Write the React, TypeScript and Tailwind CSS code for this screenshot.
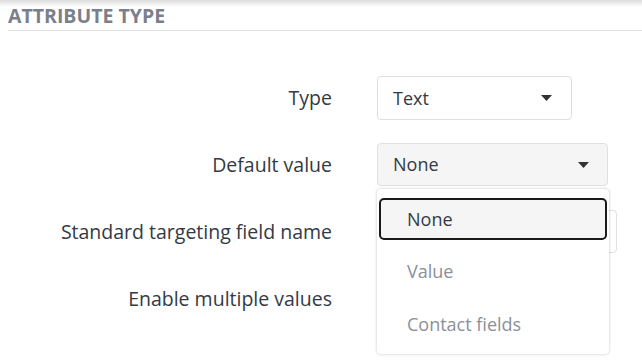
import React from "react";

function Caret() {
  return (
    <svg width="11" height="6" viewBox="0 0 11 6" className="shrink-0">
      <path d="M0 0 L11 0 L5.5 6 Z" fill="#333333" />
    </svg>
  );
}

export default function App() {
  return (
    <div
      className="relative w-[642px] h-[363px] overflow-hidden bg-white text-[#333a45]"
      style={{ fontFamily: '"Open Sans", "Noto Sans", sans-serif' }}
    >
      <div className="absolute left-0 top-0 w-full h-[7px] bg-gradient-to-b from-[#dcdcdc] to-white/0" />
      <div className="pl-2 pt-[3px]">
        <div className="text-[19.5px] font-bold leading-[26px] text-[#7b7f8b]">ATTRIBUTE TYPE</div>
        <div className="mt-[1px] h-px bg-[#e2e2e2]" />
      </div>

      <div className="grid grid-cols-[332px_1fr] gap-x-[45px] mt-[45px] text-[18px]">
        {/* Type */}
        <div className="h-[44px] flex items-center justify-end text-[19.5px]">Type</div>
        <div className="h-[44px] w-[195px] flex items-center justify-between pl-[15px] pr-[19px] border border-[#dedede] rounded-[4px] bg-white">
          <span>Text</span>
          <Caret />
        </div>

        {/* Default value */}
        <div className="mt-[23px] h-[43px] flex items-center justify-end text-[19.5px]">Default value</div>
        <div className="relative mt-[23px] h-[43px] w-[231px] flex items-center justify-between pl-[15px] pr-[18px] border border-[#e0e0e0] rounded-[4px] bg-[#f5f5f5]">
          <span>None</span>
          <Caret />
          <div className="absolute z-10 left-[-1px] top-[45px] w-[232px] h-[165px] bg-white rounded-[4px] shadow-[0_0_3px_rgba(0,0,0,0.25)] pt-[9px] px-[2px]">
            <div className="h-[42px] flex items-center pl-[26px] border-2 border-[#1a1a1a] rounded-[5px] bg-[#f5f5f5] text-[#333a45]">
              None
            </div>
            <div className="h-[53px] flex items-center pl-[28px] pt-[10px] text-[#8b909a]">Value</div>
            <div className="h-[53px] flex items-center pl-[28px] pt-[9px] text-[#8b909a]">Contact fields</div>
          </div>
        </div>

        {/* Standard targeting field name */}
        <div className="mt-[24px] h-[43px] flex items-center justify-end text-[19.5px]">Standard targeting field name</div>
        <div className="mt-[24px] h-[43px] w-[240px] border border-[#e0e0e0] rounded-[4px] bg-white" />

        {/* Enable multiple values */}
        <div className="mt-[24px] h-[43px] flex items-center justify-end text-[19.5px]">Enable multiple values</div>
        <div className="mt-[24px] h-[43px]" />
      </div>
    </div>
  );
}
